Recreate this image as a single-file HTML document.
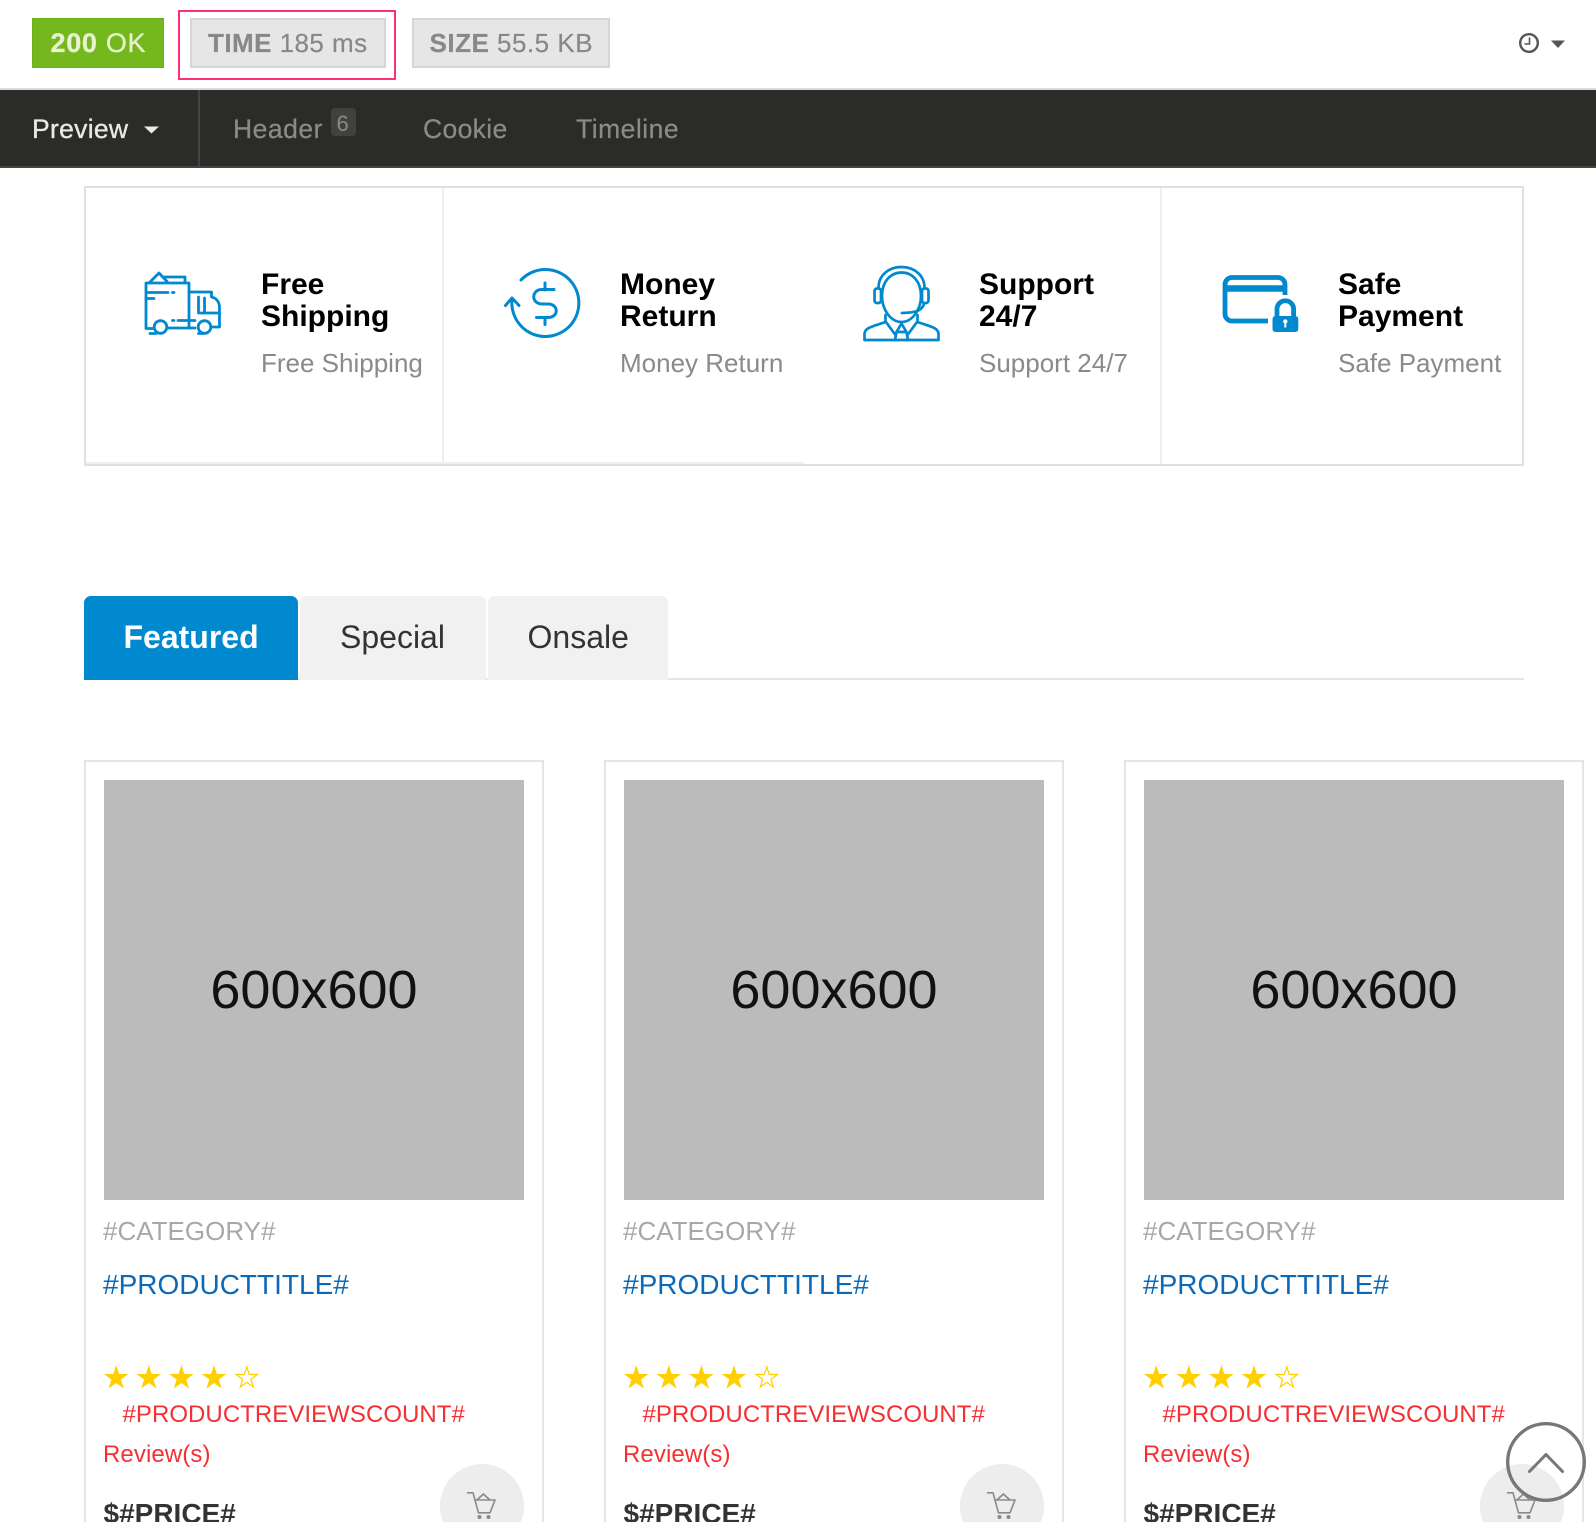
<!DOCTYPE html>
<html><head><meta charset="utf-8"><title>Preview</title>
<style>
html,body{margin:0;padding:0;width:1596px;height:1522px;overflow:hidden;background:#fff}
#p{position:relative;width:1596px;height:1522px;overflow:hidden;background:#fff}
.b{position:absolute;box-sizing:border-box}
svg{position:absolute;left:0;top:0}
text{font-family:"Liberation Sans",sans-serif}
</style></head><body><div id="p">
<!-- top bar -->
<div class="b" style="left:32px;top:18px;width:132px;height:50px;background:#74b81e;border:1px solid #6cae1c"></div>
<div class="b" style="left:178px;top:10px;width:218px;height:70px;border:2px solid #ff2f78"></div>
<div class="b" style="left:190px;top:18px;width:196px;height:50px;background:#e6e6e6;border:2px solid #d6d6d6"></div>
<div class="b" style="left:412px;top:18px;width:198px;height:50px;background:#e6e6e6;border:2px solid #d6d6d6"></div>
<div class="b" style="left:0;top:88px;width:1596px;height:2px;background:#dcdcdc"></div>
<div class="b" style="left:0;top:90px;width:1596px;height:78px;background:#2b2b27;border-bottom:2px solid #444542"></div>
<div class="b" style="left:198px;top:90px;width:2px;height:78px;background:#444542"></div>
<div class="b" style="left:330.5px;top:108px;width:25px;height:28px;background:#41413e;border-radius:4px"></div>
<!-- features -->
<div class="b" style="left:84px;top:186px;width:1440px;height:280px;border:2px solid #e0e0e0"></div>
<div class="b" style="left:86px;top:462px;width:718px;height:2px;background:#eee"></div>
<div class="b" style="left:442px;top:188px;width:2px;height:276px;background:#eee"></div>
<div class="b" style="left:1160px;top:188px;width:2px;height:276px;background:#eee"></div>
<!-- tabs -->
<div class="b" style="left:84px;top:678px;width:1440px;height:2px;background:#e5e5e5"></div>
<div class="b" style="left:84px;top:596px;width:214px;height:84px;background:#0089cf;border-radius:7px 7px 0 0"></div>
<div class="b" style="left:300px;top:596px;width:186px;height:84px;background:#f1f1f1;border-radius:7px 7px 0 0"></div>
<div class="b" style="left:488px;top:596px;width:180px;height:84px;background:#f1f1f1;border-radius:7px 7px 0 0"></div>
<!-- cards -->
<div class="b" style="left:84px;top:760px;width:460px;height:780px;border:2px solid #e5e5e5"></div>
<div class="b" style="left:604px;top:760px;width:460px;height:780px;border:2px solid #e5e5e5"></div>
<div class="b" style="left:1124px;top:760px;width:460px;height:780px;border:2px solid #e5e5e5"></div>
<div class="b" style="left:104px;top:780px;width:420px;height:420px;background:#bbb"></div>
<div class="b" style="left:624px;top:780px;width:420px;height:420px;background:#bbb"></div>
<div class="b" style="left:1144px;top:780px;width:420px;height:420px;background:#bbb"></div>
<div class="b" style="left:440px;top:1464px;width:84px;height:84px;border-radius:50%;background:#ededed"></div>
<div class="b" style="left:960px;top:1464px;width:84px;height:84px;border-radius:50%;background:#ededed"></div>
<div class="b" style="left:1480px;top:1464px;width:84px;height:84px;border-radius:50%;background:#ededed"></div>

<svg width="1596" height="1522" viewBox="0 0 1596 1522" xmlns="http://www.w3.org/2000/svg">
<!-- top bar text -->
<text x="50.5" y="52" font-size="27" fill="#e6f2d2" stroke="#e6f2d2" stroke-width=".3" letter-spacing=".7"><tspan font-weight="700">200</tspan> OK</text>
<text x="208" y="52" font-size="26" fill="#888" stroke="#888" stroke-width=".2" letter-spacing=".45"><tspan font-weight="700">TIME</tspan> 185 ms</text>
<text x="429.5" y="52" font-size="26" fill="#888" stroke="#888" stroke-width=".2" letter-spacing=".5"><tspan font-weight="700">SIZE</tspan> 55.5 KB</text>
<circle cx="1529" cy="43" r="8.8" fill="none" stroke="#555" stroke-width="2.4"/>
<path d="M1529.5 37.5V44H1524.5" fill="none" stroke="#555" stroke-width="1.6"/>
<path d="M1551 40.5H1565L1558 48Z" fill="#555"/>
<!-- nav -->
<text x="32" y="138" font-size="26.5" fill="#e8e8e8" stroke="#e8e8e8" stroke-width=".35" letter-spacing=".3">Preview</text>
<path d="M144 126.5H159L151.5 133.5Z" fill="#e8e8e8"/>
<text x="233" y="138" font-size="26.5" fill="#8a8a88" stroke="#8a8a88" stroke-width=".25" letter-spacing=".5">Header</text>
<text x="336.5" y="131" font-size="22" fill="#8a8a88">6</text>
<text x="423" y="138" font-size="26.5" fill="#8a8a88" stroke="#8a8a88" stroke-width=".25" letter-spacing=".35">Cookie</text>
<text x="576" y="138" font-size="26.5" fill="#8a8a88" stroke="#8a8a88" stroke-width=".25" letter-spacing=".5">Timeline</text>
<!-- features text -->
<g font-size="30" font-weight="700" fill="#000">
<text x="261" y="294">Free</text><text x="261" y="326">Shipping</text>
<text x="620" y="294">Money</text><text x="620" y="326">Return</text>
<text x="979" y="294">Support</text><text x="979" y="326">24/7</text>
<text x="1338" y="294">Safe</text><text x="1338" y="326">Payment</text>
</g>
<g font-size="26" fill="#8a8a8a">
<text x="261" y="372">Free Shipping</text>
<text x="620" y="372">Money Return</text>
<text x="979" y="372">Support 24/7</text>
<text x="1338" y="372">Safe Payment</text>
</g>
<!-- truck -->
<g fill="none" stroke="#0089cf" stroke-width="2.8" stroke-linecap="round" stroke-linejoin="round">
<path d="M146 283H189V328M146 283V328.5H153"/>
<path d="M150 282L159 273L167 281.5M163 277H185V283"/>
<path d="M148 292.5H168M172.5 292.5H174M146 298.5H154"/>
<path d="M167.5 328H195M172.5 320.5H174M178 320.5H195"/>
<circle cx="160.5" cy="327" r="6.3"/><circle cx="204.5" cy="327" r="6.3"/>
<path d="M150 333.5H156M198.5 333.5H203"/>
<path d="M190 292H211.5V297C216.5 298 219.5 302 219.5 308V327H212"/>
<path d="M198.5 297V313H218.5M204.5 298V312"/>
</g>
<!-- money -->
<g fill="none" stroke="#0089cf" stroke-width="3" stroke-linecap="round" stroke-linejoin="round">
<path d="M521 280A33.5 33.5 0 1 1 512 300"/>
<path d="M505.5 305.5L512 298L519 305.5"/>
<path d="M545 283V290M545 317.5V324.5"/>
<path d="M554 289.5H542C531 289.5 531 304 542 304H548C559 304 559 317.5 548 317.5H536.5"/>
</g>
<!-- support -->
<g fill="none" stroke="#0089cf" stroke-width="2.7" stroke-linecap="round" stroke-linejoin="round">
<path d="M878.5 288C878.5 275 889 267 901.5 267C914 267 924.5 275 924.5 288"/>
<path d="M882 296C882 281 891 272.5 901.5 272.5C912 272.5 921 281 921 296C921 310 912 322 901.5 322C891 322 882 310 882 296Z"/>
<rect x="874.5" y="288.5" width="6.5" height="14.5" rx="2.5"/>
<rect x="922" y="288.5" width="6.5" height="14.5" rx="2.5"/>
<path d="M924 304C922 310 918 312.5 902 313"/>
<path d="M885.5 315V322C875 326 864.5 327 864.5 334V340H938.5V334C938.5 327 928 326 917.5 322V315"/>
<path d="M886 322L895.5 335M917 322L907.5 335"/>
<path d="M901.5 323.5L896.5 332H906.5ZM896.5 332L895 340M906.5 332L908 340"/>
</g>
<!-- safe -->
<g fill="none" stroke="#0089cf" stroke-linejoin="round">
<path d="M1268 321H1232A7 7 0 0 1 1225 314V284.5A7 7 0 0 1 1232 277.5H1278A7 7 0 0 1 1285 284.5V295" stroke-width="4.8"/>
<path d="M1225 288.5H1285" stroke-width="6.5"/>
<path d="M1277 318V309A8.3 8.3 0 0 1 1293.6 309V318" stroke-width="4.8"/>
</g>
<rect x="1272.5" y="316" width="25.8" height="16" rx="3" fill="#0089cf"/>
<circle cx="1285.3" cy="321.5" r="2.2" fill="#fff"/><rect x="1284.3" y="322" width="2" height="5.5" fill="#fff"/>
<!-- tabs text -->
<text x="123.5" y="648" font-size="32" font-weight="700" fill="#fff">Featured</text>
<text x="340" y="648" font-size="32" fill="#333">Special</text>
<text x="527.5" y="648" font-size="32" fill="#333">Onsale</text>

<!-- card 1 -->
<g>
<text x="314" y="1008" font-size="54" fill="#111" text-anchor="middle">600x600</text>
<text x="103" y="1240" font-size="26" fill="#a8a8a8">#CATEGORY#</text>
<text x="103" y="1294" font-size="28" fill="#0a69b8">#PRODUCTTITLE#</text>
<g fill="#ffcf00">
<polygon transform="translate(116.2 1378)" points="0,-13 2.92,-4.02 12.36,-4.02 4.72,1.54 7.64,10.52 0,4.97 -7.64,10.52 -4.72,1.54 -12.36,-4.02 -2.92,-4.02"/>
<polygon transform="translate(148.8 1378)" points="0,-13 2.92,-4.02 12.36,-4.02 4.72,1.54 7.64,10.52 0,4.97 -7.64,10.52 -4.72,1.54 -12.36,-4.02 -2.92,-4.02"/>
<polygon transform="translate(181.4 1378)" points="0,-13 2.92,-4.02 12.36,-4.02 4.72,1.54 7.64,10.52 0,4.97 -7.64,10.52 -4.72,1.54 -12.36,-4.02 -2.92,-4.02"/>
<polygon transform="translate(214 1378)" points="0,-13 2.92,-4.02 12.36,-4.02 4.72,1.54 7.64,10.52 0,4.97 -7.64,10.52 -4.72,1.54 -12.36,-4.02 -2.92,-4.02"/>
</g>
<polygon transform="translate(246.8 1378)" fill="none" stroke="#ffcf00" stroke-width="1.2" points="0,-11.2 2.5,-3.5 10.65,-3.5 4.05,1.35 6.6,9.05 0,4.3 -6.6,9.05 -4.05,1.35 -10.65,-3.5 -2.5,-3.5"/>
<text x="122.5" y="1422" font-size="24" fill="#f52f32" letter-spacing=".05">#PRODUCTREVIEWSCOUNT#</text>
<text x="103" y="1462" font-size="24" fill="#f52f32" letter-spacing=".1">Review(s)</text>
<text x="103.5" y="1523" font-size="28" font-weight="700" fill="#333">$#PRICE#</text>
<g fill="none" stroke="#8a8a8a" stroke-width="1.6" stroke-linejoin="round"><path d="M467 1492.8H473L478.5 1512.8H490L495 1500H474"/><path d="M477 1500L483.3 1494L490 1500"/></g>
<circle cx="479.5" cy="1517" r="2" fill="#8a8a8a"/><circle cx="488.5" cy="1517" r="2" fill="#8a8a8a"/>
</g>
<!-- card 2 -->
<g transform="translate(520 0)">
<text x="314" y="1008" font-size="54" fill="#111" text-anchor="middle">600x600</text>
<text x="103" y="1240" font-size="26" fill="#a8a8a8">#CATEGORY#</text>
<text x="103" y="1294" font-size="28" fill="#0a69b8">#PRODUCTTITLE#</text>
<g fill="#ffcf00">
<polygon transform="translate(116.2 1378)" points="0,-13 2.92,-4.02 12.36,-4.02 4.72,1.54 7.64,10.52 0,4.97 -7.64,10.52 -4.72,1.54 -12.36,-4.02 -2.92,-4.02"/>
<polygon transform="translate(148.8 1378)" points="0,-13 2.92,-4.02 12.36,-4.02 4.72,1.54 7.64,10.52 0,4.97 -7.64,10.52 -4.72,1.54 -12.36,-4.02 -2.92,-4.02"/>
<polygon transform="translate(181.4 1378)" points="0,-13 2.92,-4.02 12.36,-4.02 4.72,1.54 7.64,10.52 0,4.97 -7.64,10.52 -4.72,1.54 -12.36,-4.02 -2.92,-4.02"/>
<polygon transform="translate(214 1378)" points="0,-13 2.92,-4.02 12.36,-4.02 4.72,1.54 7.64,10.52 0,4.97 -7.64,10.52 -4.72,1.54 -12.36,-4.02 -2.92,-4.02"/>
</g>
<polygon transform="translate(246.8 1378)" fill="none" stroke="#ffcf00" stroke-width="1.2" points="0,-11.2 2.5,-3.5 10.65,-3.5 4.05,1.35 6.6,9.05 0,4.3 -6.6,9.05 -4.05,1.35 -10.65,-3.5 -2.5,-3.5"/>
<text x="122.5" y="1422" font-size="24" fill="#f52f32" letter-spacing=".05">#PRODUCTREVIEWSCOUNT#</text>
<text x="103" y="1462" font-size="24" fill="#f52f32" letter-spacing=".1">Review(s)</text>
<text x="103.5" y="1523" font-size="28" font-weight="700" fill="#333">$#PRICE#</text>
<g fill="none" stroke="#8a8a8a" stroke-width="1.6" stroke-linejoin="round"><path d="M467 1492.8H473L478.5 1512.8H490L495 1500H474"/><path d="M477 1500L483.3 1494L490 1500"/></g>
<circle cx="479.5" cy="1517" r="2" fill="#8a8a8a"/><circle cx="488.5" cy="1517" r="2" fill="#8a8a8a"/>
</g>
<!-- card 3 -->
<g transform="translate(1040 0)">
<text x="314" y="1008" font-size="54" fill="#111" text-anchor="middle">600x600</text>
<text x="103" y="1240" font-size="26" fill="#a8a8a8">#CATEGORY#</text>
<text x="103" y="1294" font-size="28" fill="#0a69b8">#PRODUCTTITLE#</text>
<g fill="#ffcf00">
<polygon transform="translate(116.2 1378)" points="0,-13 2.92,-4.02 12.36,-4.02 4.72,1.54 7.64,10.52 0,4.97 -7.64,10.52 -4.72,1.54 -12.36,-4.02 -2.92,-4.02"/>
<polygon transform="translate(148.8 1378)" points="0,-13 2.92,-4.02 12.36,-4.02 4.72,1.54 7.64,10.52 0,4.97 -7.64,10.52 -4.72,1.54 -12.36,-4.02 -2.92,-4.02"/>
<polygon transform="translate(181.4 1378)" points="0,-13 2.92,-4.02 12.36,-4.02 4.72,1.54 7.64,10.52 0,4.97 -7.64,10.52 -4.72,1.54 -12.36,-4.02 -2.92,-4.02"/>
<polygon transform="translate(214 1378)" points="0,-13 2.92,-4.02 12.36,-4.02 4.72,1.54 7.64,10.52 0,4.97 -7.64,10.52 -4.72,1.54 -12.36,-4.02 -2.92,-4.02"/>
</g>
<polygon transform="translate(246.8 1378)" fill="none" stroke="#ffcf00" stroke-width="1.2" points="0,-11.2 2.5,-3.5 10.65,-3.5 4.05,1.35 6.6,9.05 0,4.3 -6.6,9.05 -4.05,1.35 -10.65,-3.5 -2.5,-3.5"/>
<text x="122.5" y="1422" font-size="24" fill="#f52f32" letter-spacing=".05">#PRODUCTREVIEWSCOUNT#</text>
<text x="103" y="1462" font-size="24" fill="#f52f32" letter-spacing=".1">Review(s)</text>
<text x="103.5" y="1523" font-size="28" font-weight="700" fill="#333">$#PRICE#</text>
<g fill="none" stroke="#8a8a8a" stroke-width="1.6" stroke-linejoin="round"><path d="M467 1492.8H473L478.5 1512.8H490L495 1500H474"/><path d="M477 1500L483.3 1494L490 1500"/></g>
<circle cx="479.5" cy="1517" r="2" fill="#8a8a8a"/><circle cx="488.5" cy="1517" r="2" fill="#8a8a8a"/>
</g>
<!-- scroll top -->
<circle cx="1546" cy="1462" r="38.3" fill="none" stroke="#777" stroke-width="3.4"/>
<path d="M1529.5 1471.5L1546 1454.5L1562.5 1471.5" fill="none" stroke="#777" stroke-width="3" stroke-linecap="round" stroke-linejoin="round"/>
</svg>
</div></body></html>
